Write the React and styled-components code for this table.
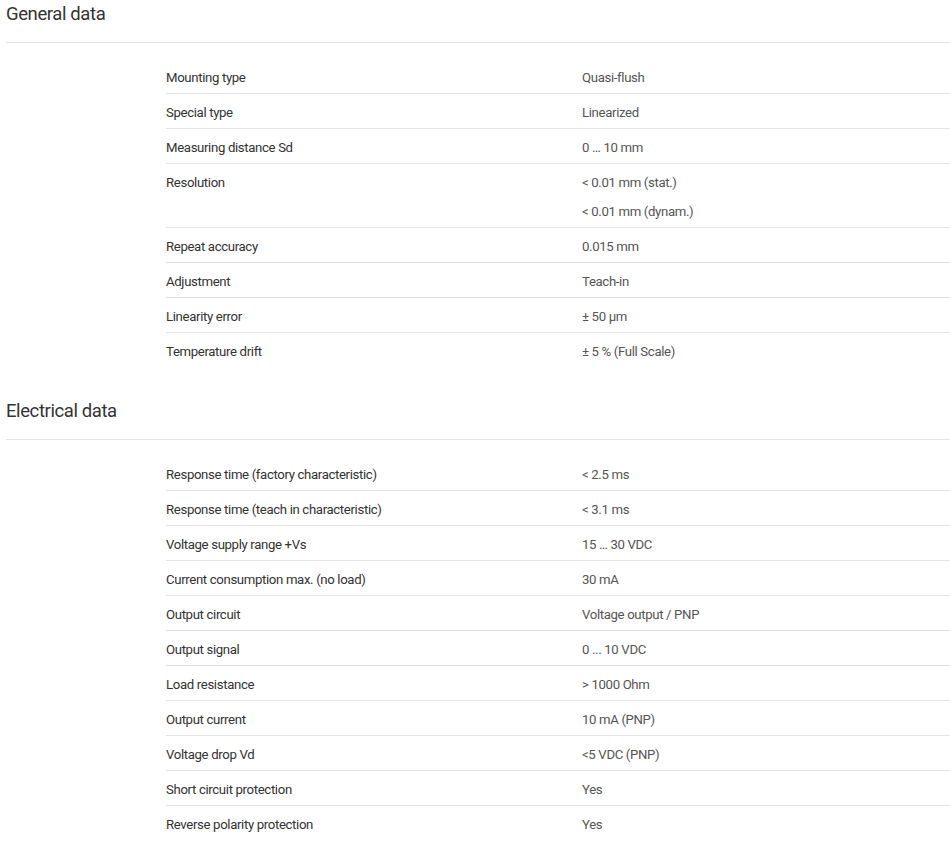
import React from "react";
import styled, { createGlobalStyle } from "styled-components";

const Global = createGlobalStyle`
  html, body { margin: 0; padding: 0; background: #fff; }
  body { font-family: Roboto, "Liberation Sans", sans-serif; }
`;

const Page = styled.div`
  padding: 0 0 0 6px;
`;

const Section = styled.section`
  margin-bottom: 30px;
`;

const Heading = styled.h2`
  margin: 0;
  height: 43px;
  padding-top: 2px;
  box-sizing: border-box;
  font-size: 18.5px;
  letter-spacing: -0.4px;
  font-weight: 400;
  line-height: 24px;
  color: #333;
  border-bottom: 1px solid #e3e3e3;
`;

const Table = styled.div`
  margin: 16px 0 0 160px;
  display: flex;
  flex-direction: column;
`;

const Row = styled.div`
  display: grid;
  grid-template-columns: 416px 1fr;
  border-bottom: ${(p) => (p.$last ? "none" : "1px solid #e3e3e3")};
  padding: 8px 0 4px;
  font-size: 13.2px;
  letter-spacing: -0.35px;
  line-height: 22px;
`;

const Label = styled.div`
  color: #333;
`;

const Values = styled.div`
  color: #555;
  display: flex;
  flex-direction: column;
  gap: 7px;
`;

const general = [
  ["Mounting type", ["Quasi-flush"]],
  ["Special type", ["Linearized"]],
  ["Measuring distance Sd", ["0 … 10 mm"]],
  ["Resolution", ["< 0.01 mm (stat.)", "< 0.01 mm (dynam.)"]],
  ["Repeat accuracy", ["0.015 mm"]],
  ["Adjustment", ["Teach-in"]],
  ["Linearity error", ["± 50 µm"]],
  ["Temperature drift", ["± 5 % (Full Scale)"]],
];

const electrical = [
  ["Response time (factory characteristic)", ["< 2.5 ms"]],
  ["Response time (teach in characteristic)", ["< 3.1 ms"]],
  ["Voltage supply range +Vs", ["15 … 30 VDC"]],
  ["Current consumption max. (no load)", ["30 mA"]],
  ["Output circuit", ["Voltage output / PNP"]],
  ["Output signal", ["0 ... 10 VDC"]],
  ["Load resistance", ["> 1000 Ohm"]],
  ["Output current", ["10 mA (PNP)"]],
  ["Voltage drop Vd", ["<5 VDC (PNP)"]],
  ["Short circuit protection", ["Yes"]],
  ["Reverse polarity protection", ["Yes"]],
];

const DataSection = ({ title, rows }) => (
  <Section>
    <Heading>{title}</Heading>
    <Table>
      {rows.map(([label, vals], i) => (
        <Row key={label} $last={i === rows.length - 1}>
          <Label>{label}</Label>
          <Values>
            {vals.map((v) => (
              <span key={v}>{v}</span>
            ))}
          </Values>
        </Row>
      ))}
    </Table>
  </Section>
);

export default function App() {
  return (
    <Page>
      <Global />
      <DataSection title="General data" rows={general} />
      <DataSection title="Electrical data" rows={electrical} />
    </Page>
  );
}
